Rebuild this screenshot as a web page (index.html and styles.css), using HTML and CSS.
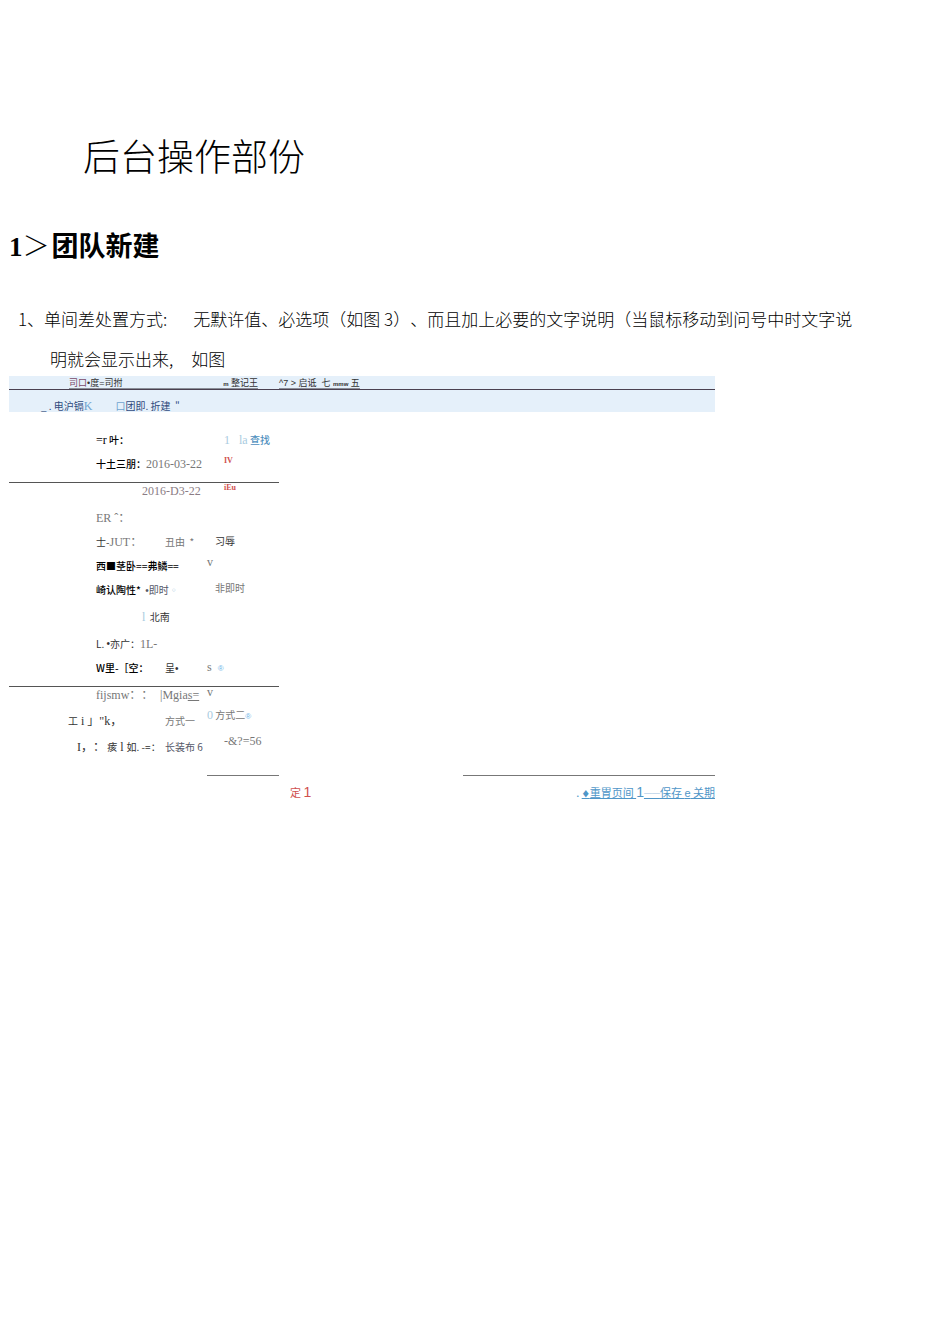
FILE: index.html
```
<!DOCTYPE html>
<html lang="zh-CN">
<head>
    <meta charset="UTF-8">
    <meta name="viewport" content="width=device-width, initial-scale=1.0">
    <title>后台操作部份</title>
    <link rel="stylesheet" href="styles.css">
</head>
<body>
    <main class="page">
        <h1 class="title">后台操作部份</h1>
        <h2 class="heading"><span class="heading-number">1</span><span class="heading-mark">＞</span>团队新建</h2>

        <div class="intro">
            <p class="intro-line"><span>1、单间差处置方式:</span><span>无默许值、必选项（如图 3）、而且加上必要的文字说明（当鼠标移动到问号中时文字说</span></p>
            <p class="intro-line intro-next"><span>明就会显示出来,</span><span>如图</span></p>
        </div>

        <div class="panel">
            <!-- Top bar -->
            <nav class="bar">
                <div class="bar-menu">
                    <a class="menu-link menu-wide" href="#"><span><span class="plum">司口</span><span class="dot">•</span>度=司拊</span><span><small>m</small> 整记王</span></a>
                    <a class="menu-link" href="#">^7 &gt; 启诋&nbsp; 七 <small>mmw</small> 五</a>
                </div>
                <div class="bar-tabs">
                    <span>_ . 电沪镉<span class="serif sky">K</span></span>
                    <span><span class="sky">口</span>团即. 折建&nbsp; "</span>
                </div>
            </nav>

            <!-- Form -->
            <section class="block block-first">
                <div class="labels">
                    <div class="row strong"><span class="serif">=r</span> 叶：</div>
                    <div class="row strong">十土三朋：<span class="serif gray">2016-03-22</span></div>
                </div>
                <div class="extras">
                    <div class="extra in-2"><span class="serif pale">1 &nbsp; la</span> <a class="find" href="#">查找</a></div>
                    <div class="extra in-2 note gap-s">IV</div>
                </div>
            </section>

            <section class="block">
                <div class="labels">
                    <div class="row row-date serif mauve">2016-D3-22</div>
                    <div class="row gap-l serif gray">ER ˆ：</div>
                    <div class="row"><span class="label">士-<span class="serif gray">JUT：</span></span><span class="gray">丑由&nbsp; *</span></div>
                    <div class="row strong">西■茎卧==弗鳞==</div>
                    <div class="row"><span class="strong">崎认陶性*</span>&nbsp; <span class="slate"><span class="dot">•</span>即时<span class="pale">◦</span></span></div>
                    <div class="row row-date gap-l"><span class="serif pale">l</span>&nbsp; 北南</div>
                    <div class="row gap-l">L. <span class="dot">•</span>亦广：<span class="serif gray">1L-</span></div>
                    <div class="row strong"><span class="label">W里-［空：</span><span class="plain">呈<span class="dot">•</span></span></div>
                </div>
                <div class="extras">
                    <div class="extra in-2 note mark">iEu</div>
                    <div class="extra in-1 gap-x">习辱</div>
                    <div class="extra serif gray gap-s">v</div>
                    <div class="extra in-1 gap-l gray">非即时</div>
                    <div class="extra serif gray gap-xx">s &nbsp;<span class="hint">®</span></div>
                </div>
            </section>

            <section class="block block-last">
                <div class="labels">
                    <div class="row serif gray"><span class="label">fijsmw：：</span><span class="bar-mark">|</span>Mgia<u>s=</u></div>
                    <div class="row row-out-2 gap-m"><span class="label">工<span class="serif"> i 」"k，</span></span><span class="gray">方式一</span></div>
                    <div class="row row-out-1 gap-m"><span class="label"><span class="serif">I，：</span> 痎<span class="serif"> l </span>如. -=：</span><span class="slate">长装布 6</span></div>
                </div>
                <div class="extras">
                    <div class="extra serif gray mark">v</div>
                    <div class="extra gap-l gray"><span class="pale serif">0</span> 方式二<span class="hint">®</span></div>
                    <div class="extra in-2 serif gray gap-l">-&amp;?=56</div>
                </div>
            </section>

            <!-- Bottom actions -->
            <footer class="actions">
                <div class="rule rule-short"></div>
                <div class="rule rule-long"></div>
                <div class="confirm">定 <span class="digit">1</span></div>
                <div class="links">. <a href="#"><span class="diamond">♦</span>重胃页间 </a><span class="digit">1</span><a href="#"><span class="dash">──</span>保存 <span class="dot">e</span> 关期</a></div>
            </footer>
        </div>
    </main>
</body>
</html>
```

FILE: styles.css
```
* {
    margin: 0;
    padding: 0;
    box-sizing: border-box;
}

body {
    font-family: "Noto Sans CJK SC", sans-serif;
    font-weight: 300;
    background: #fff;
    color: #000;
    text-spacing-trim: space-all;
}

a {
    color: inherit;
}

.page {
    padding: 129px 9px 40px;
}

.title {
    padding-left: 74px;
    font-size: 37px;
    font-weight: 300;
    line-height: 52px;
}

.heading {
    margin-top: 44px;
    font-size: 27px;
    font-weight: 700;
    line-height: 40px;
}

.heading-number {
    font-family: "Liberation Serif", serif;
}

.heading-mark {
    margin-right: 2px;
    font-weight: 300;
}

/* Intro text */
.intro {
    display: flex;
    flex-direction: column;
    gap: 6px;
    margin-top: 35px;
    font-size: 17px;
    line-height: 34px;
}

.intro-line {
    display: flex;
    gap: 26px;
    padding-left: 9px;
    white-space: nowrap;
}

.intro-next {
    gap: 18px;
    padding-left: 41px;
}

.panel {
    margin-right: 226px;
    font-size: 10px;
    font-weight: 400;
    line-height: 16px;
    color: #333;
    white-space: nowrap;
}

/* Top bar */
.bar {
    background: #e5f0fa;
}

.bar-menu {
    display: flex;
    gap: 21px;
    padding-left: 60px;
    border-bottom: 1px solid #4a4050;
    line-height: 12px;
}

.menu-link {
    height: 13px;
    padding-top: 1px;
    border-bottom: 1px solid #8a8f98;
    font-family: "Liberation Sans", "Noto Sans CJK SC", sans-serif;
    font-size: 9px;
    text-decoration: none;
}

.menu-wide {
    display: flex;
    justify-content: space-between;
    width: 189px;
}

.menu-link small {
    font-size: 6px;
    font-weight: 700;
}

.bar-tabs {
    display: flex;
    gap: 23px;
    padding: 10px 0 0 32px;
    line-height: 12px;
    color: #2f4a7d;
}

/* Form */
.block {
    display: grid;
    grid-template-columns: 198px 72px;
    width: 270px;
    padding-bottom: 10px;
    border-bottom: 1px solid #555;
}

.block-first {
    padding-top: 20px;
}

.block-last {
    padding-bottom: 0;
    border-bottom: 0;
}

.labels,
.extras {
    display: flex;
    flex-direction: column;
}

.row {
    display: flex;
    height: 16px;
    padding-left: 87px;
    white-space: pre;
}

.row + .row {
    margin-top: 8px;
}

.row + .gap-m {
    margin-top: 10px;
}

.row + .gap-l {
    margin-top: 11px;
}

.row-date {
    padding-left: 133px;
}

.row-out-1 {
    padding-left: 68px;
}

.row-out-2 {
    padding-left: 59px;
}

.label {
    width: 69px;
}

.row-out-1 .label {
    width: 88px;
}

.row-out-2 .label {
    width: 97px;
}

.extra {
    height: 16px;
}

.mark {
    height: 10px;
    line-height: 10px;
}

.in-1 {
    padding-left: 8px;
}

.in-2 {
    padding-left: 17px;
}

.gap-s {
    margin-top: 5px;
}

.extra.gap-l {
    margin-top: 10px;
}

.gap-x {
    margin-top: 40px;
}

.gap-xx {
    margin-top: 63px;
}

.serif {
    font-family: "Liberation Serif", "Noto Sans CJK SC", serif;
    font-size: 12px;
}

.strong {
    font-weight: 500;
    color: #000;
}

.plain {
    font-weight: 400;
    color: #333;
}

.gray {
    font-weight: 400;
    color: #777;
}

.mauve {
    color: #8a7c84;
}

.slate {
    color: #555868;
}

.plum {
    color: #7a4a68;
}

.sky {
    color: #6fa3cf;
}

.pale {
    color: #a9cbe0;
}

.find {
    color: #4f8fbe;
    font-weight: 500;
    text-decoration: none;
}

.note {
    font-family: "Liberation Serif", serif;
    font-size: 8px;
    font-weight: 700;
    color: #d0504e;
}

.hint {
    font-family: "Liberation Sans", sans-serif;
    font-size: 8px;
    color: #6db5e8;
}

.dot {
    font-family: "Liberation Sans", sans-serif;
}

.bar-mark {
    margin-left: -5px;
}

/* Bottom actions */
.actions {
    display: grid;
    grid-template-columns: 198px 72px 184px 1fr;
    row-gap: 8px;
    margin-top: 20px;
    font-size: 11px;
}

.rule {
    height: 1px;
    background: #777;
}

.rule-short {
    grid-column: 2;
}

.rule-long {
    grid-column: 4;
}

.confirm {
    grid-column: 3;
    padding-left: 11px;
    color: #d0504e;
}

.links {
    grid-column: 4;
    text-align: right;
    color: #4f96c8;
}

.diamond,
.dash {
    font-size: 8px;
}

.digit {
    font-family: "Liberation Sans", sans-serif;
    font-size: 14px;
}
```
